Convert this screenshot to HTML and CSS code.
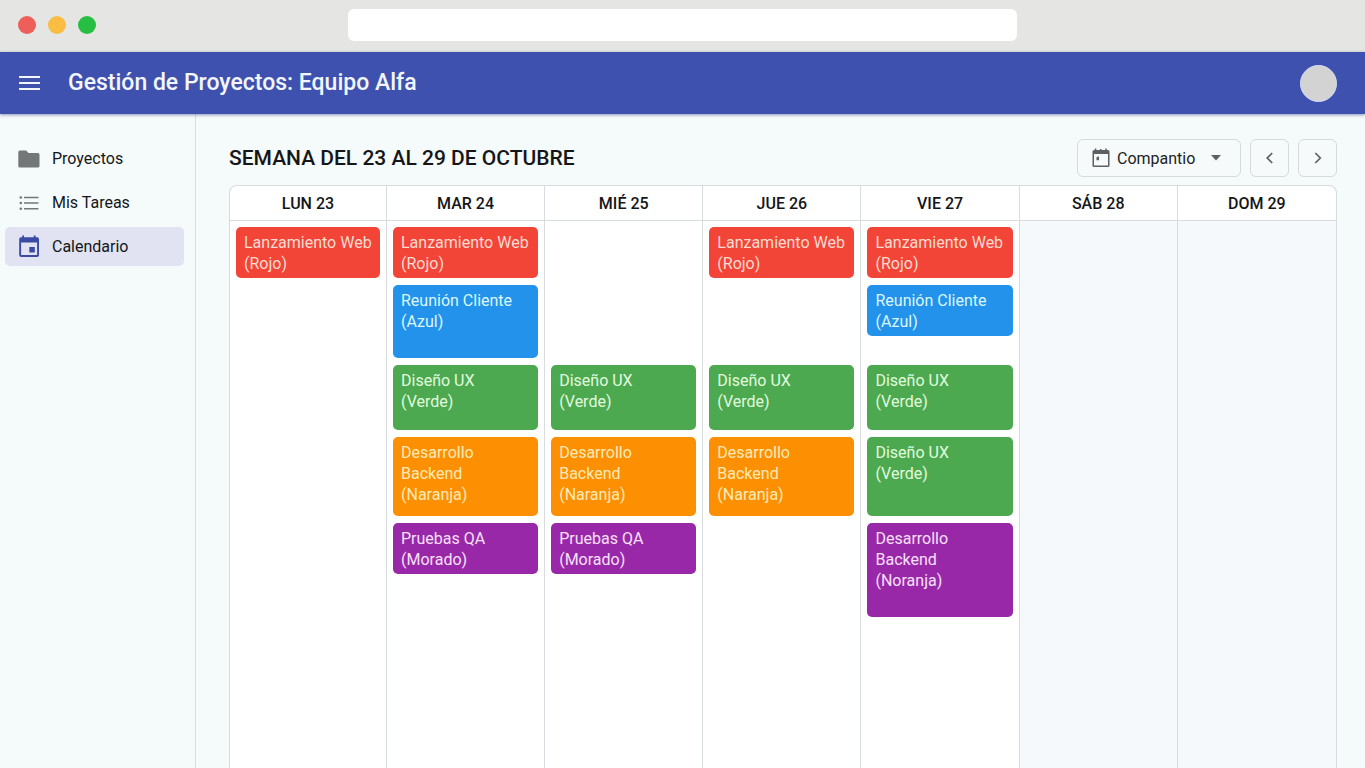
FILE: index.html
```html
<!DOCTYPE html>
<html lang="es">
<head>
<meta charset="utf-8">
<meta name="viewport" content="width=device-width, initial-scale=1">
<title>Gestión de Proyectos: Equipo Alfa</title>
<link rel="stylesheet" href="styles.css">
</head>
<body>
<div class="browser-bar">
  <div class="window-dots">
    <span class="dot dot-close"></span>
    <span class="dot dot-minimize"></span>
    <span class="dot dot-expand"></span>
  </div>
  <input class="address" type="text" aria-label="Dirección">
</div>

<header class="app-header">
  <button class="menu-button" type="button" aria-label="Menú">
    <svg width="22" height="16" viewBox="0 0 22 16" fill="none" stroke="currentColor" stroke-width="2"><path d="M1 2h21M1 8h21M1 14h21"/></svg>
  </button>
  <h1 class="app-title">Gestión de Proyectos: Equipo Alfa</h1>
  <button class="avatar" type="button" aria-label="Perfil"></button>
</header>

<div class="layout">
  <nav class="sidebar">
    <a class="nav-item" href="#">
      <svg class="nav-icon" width="24" height="24" viewBox="0 0 24 24" fill="currentColor"><path d="M3 3.500h6.200l2.300 2.400h9.300a1.700 1.700 0 0 1 1.700 1.700v11.300a1.700 1.700 0 0 1-1.700 1.700H3a1.700 1.700 0 0 1-1.700-1.700V5.200A1.700 1.700 0 0 1 3 3.500z"/></svg>
      Proyectos
    </a>
    <a class="nav-item" href="#">
      <svg class="nav-icon" width="24" height="24" viewBox="0 0 24 24" fill="currentColor"><path d="M7 5.700h14.500v1.600H7zM7 11.200h14.500v1.600H7zM7 16.900h14.500v1.600H7z"/><circle cx="3.800" cy="6.500" r="1.300"/><circle cx="3.800" cy="12" r="1.300"/><circle cx="3.800" cy="17.700" r="1.300"/></svg>
      Mis Tareas
    </a>
    <a class="nav-item nav-item-active" href="#" aria-current="page">
      <svg class="nav-icon" width="24" height="24" viewBox="0 0 24 24" fill="currentColor"><path fill-rule="evenodd" d="M5.200.5h1.800v1.800h9.800V.5h1.800v1.800h1.500a1.900 1.900 0 0 1 1.900 1.900v15.800a1.900 1.900 0 0 1-1.900 1.900H4.100a1.900 1.900 0 0 1-1.900-1.900V4.200A1.900 1.900 0 0 1 4.100 2.300h1.100zM4.100 7.500v12.500h16v-12.500z"/><path d="M12.300 12h5.500v5.500h-5.500z"/></svg>
      Calendario
    </a>
  </nav>

  <main class="content">
    <div class="toolbar">
      <h2 class="week-title">SEMANA DEL 23 AL 29 DE OCTUBRE</h2>
      <div class="controls">
        <div class="view-select">
          <svg width="18" height="20" viewBox="0 0 18 20" fill="currentColor"><path fill-rule="evenodd" d="M2.800.5h1.500V2h3.700V1h1.500v1h3.700V.5h1.500V2H16a1.500 1.500 0 0 1 1.500 1.500v14A1.500 1.500 0 0 1 16 19H2a1.500 1.500 0 0 1-1.500-1.500v-14A1.500 1.500 0 0 1 2 2h.800zM2 6v11.500h14V6z"/><path d="M4.500 9.200l2.500-.9v3.900H4.500z"/></svg>
          <select class="view-field" aria-label="Vista"><option>Compantio</option></select>
          <svg class="caret" width="10" height="6" viewBox="0 0 10 6" fill="currentColor"><path d="M0 0h10L5 5.500z"/></svg>
        </div>
        <button class="step-button" type="button" aria-label="Semana anterior">
          <svg width="8" height="12" viewBox="0 0 8 12" fill="none" stroke="currentColor" stroke-width="1.700"><path d="M6.200 1l-5 5 5 5"/></svg>
        </button>
        <button class="step-button" type="button" aria-label="Semana siguiente">
          <svg width="8" height="12" viewBox="0 0 8 12" fill="none" stroke="currentColor" stroke-width="1.700"><path d="M1.300 1l5 5-5 5"/></svg>
        </button>
      </div>
    </div>

    <div class="calendar">
      <table class="week">
        <thead>
          <tr>
            <th scope="col">LUN 23</th>
            <th scope="col">MAR 24</th>
            <th scope="col">MIÉ 25</th>
            <th scope="col">JUE 26</th>
            <th scope="col">VIE 27</th>
            <th scope="col">SÁB 28</th>
            <th scope="col">DOM 29</th>
          </tr>
        </thead>
        <tbody>
          <tr>
            <td>
              <div class="day">
                <div class="event slot-1 red">Lanzamiento Web (Rojo)</div>
              </div>
            </td>
            <td>
              <div class="day">
                <div class="event slot-1 red">Lanzamiento Web (Rojo)</div>
                <div class="event slot-2 blue">Reunión Cliente (Azul)</div>
                <div class="event slot-3 green">Diseño UX<br>(Verde)</div>
                <div class="event slot-4 orange">Desarrollo<br>Backend<br>(Naranja)</div>
                <div class="event slot-5 purple">Pruebas QA (Morado)</div>
              </div>
            </td>
            <td>
              <div class="day">
                <div class="event slot-3 green">Diseño UX<br>(Verde)</div>
                <div class="event slot-4 orange">Desarrollo<br>Backend<br>(Naranja)</div>
                <div class="event slot-5 purple">Pruebas QA (Morado)</div>
              </div>
            </td>
            <td>
              <div class="day">
                <div class="event slot-1 red">Lanzamiento Web (Rojo)</div>
                <div class="event slot-3 green">Diseño UX<br>(Verde)</div>
                <div class="event slot-4 orange">Desarrollo<br>Backend<br>(Naranja)</div>
              </div>
            </td>
            <td>
              <div class="day">
                <div class="event slot-1 red">Lanzamiento Web (Rojo)</div>
                <div class="event slot-2 blue short">Reunión Cliente (Azul)</div>
                <div class="event slot-3 green">Diseño UX<br>(Verde)</div>
                <div class="event slot-4 green">Diseño UX<br>(Verde)</div>
                <div class="event slot-5 purple tall">Desarrollo<br>Backend<br>(Noranja)</div>
              </div>
            </td>
            <td class="weekend"></td>
            <td class="weekend"></td>
          </tr>
        </tbody>
      </table>
    </div>
  </main>
</div>
</body>
</html>
```
FILE: styles.css
```css
* {
  box-sizing: border-box;
}

body {
  margin: 0;
  height: 100vh;
  display: flex;
  flex-direction: column;
  overflow: hidden;
  background: #f5fafb;
  color: #141618;
  font: 16px/21px Roboto, "Liberation Sans", sans-serif;
}

button,
select,
input {
  font: inherit;
  color: inherit;
}

.browser-bar {
  flex: none;
  display: grid;
  grid-template-columns: 1fr 49% 1fr;
  align-items: center;
  height: 52px;
  padding-bottom: 2px;
  background: #e5e5e4;
}

.window-dots {
  display: flex;
  gap: 12px;
  padding-left: 18px;
}

.dot {
  width: 18px;
  height: 18px;
  border-radius: 50%;
}

.dot-close { background: #ed5f58; }
.dot-minimize { background: #f8bd42; }
.dot-expand { background: #26bf43; }

.address {
  width: 100%;
  height: 32px;
  padding: 0 12px;
  border: 0;
  border-radius: 6px;
  background: #fff;
}

.app-header {
  flex: none;
  display: flex;
  align-items: center;
  height: 62px;
  padding: 0 28px 0 18px;
  background: #3f51ae;
  color: #f3f6ff;
  box-shadow: 0 1px 3px rgba(40, 55, 120, 0.5);
  z-index: 1;
}

.menu-button {
  display: flex;
  padding: 0;
  border: 0;
  background: none;
}

.app-title {
  flex: 1;
  margin: 0 0 0 28px;
  font-size: 23px;
  line-height: 32px;
  font-weight: 500;
}

.avatar {
  width: 37px;
  height: 37px;
  padding: 0;
  border: 1px solid #d3dcf2;
  border-radius: 50%;
  background: #d3d3d3;
}

.layout {
  flex: 1;
  display: flex;
  min-height: 0;
}

.sidebar {
  flex: none;
  display: flex;
  flex-direction: column;
  gap: 5px;
  width: 196px;
  padding: 25px 11px 0 5px;
  border-right: 1px solid #d9dde0;
}

.nav-item {
  display: flex;
  align-items: center;
  gap: 11px;
  height: 39px;
  padding: 0 12px;
  border-radius: 5px;
  color: inherit;
  text-decoration: none;
}

.nav-icon {
  color: #747777;
}

.nav-item-active {
  background: #e1e3f2;
}

.nav-item-active .nav-icon {
  color: #3b4ba3;
}

.content {
  flex: 1;
  display: flex;
  flex-direction: column;
  gap: 8px;
  min-width: 0;
  padding: 25px 28px 0 33px;
}

.toolbar {
  display: flex;
  align-items: center;
  justify-content: space-between;
}

.week-title {
  margin: 0;
  font-size: 21px;
  line-height: 28px;
  font-weight: 500;
}

.controls {
  display: flex;
  gap: 9px;
}

.view-select,
.step-button {
  display: flex;
  align-items: center;
  height: 38px;
  border: 1px solid #d5dadd;
  border-radius: 6px;
  background: #f7fafb;
  color: #5c6063;
}

.view-select {
  position: relative;
  padding-left: 14px;
}

.view-field {
  appearance: none;
  width: 130px;
  height: 100%;
  padding: 0 0 0 7px;
  border: 0;
  background: none;
  color: #202325;
}

.caret {
  position: absolute;
  right: 19px;
  pointer-events: none;
}

.step-button {
  justify-content: center;
  width: 39px;
  padding: 0;
}

.calendar {
  flex: 1;
  min-height: 0;
  overflow: hidden;
  border: 1px solid #d9dcde;
  border-bottom: 0;
  border-radius: 8px 8px 0 0;
  background: #fff;
}

.week {
  width: 100%;
  height: 100%;
  table-layout: fixed;
  border-collapse: separate;
  border-spacing: 0;
}

.week th {
  height: 35px;
  padding: 0;
  border-bottom: 1px solid #d9dcde;
  font-weight: 500;
}

.week th:first-child {
  width: 157px;
}

.week td {
  padding: 6px;
  vertical-align: top;
}

.week th:not(:last-child),
.week td:not(:last-child) {
  border-right: 1px solid #d9dcde;
}

.week .weekend {
  background: #f5f9fb;
}

.day {
  display: grid;
  grid-template-rows: 51px 73px 65px 79px auto;
  row-gap: 7px;
}

.event {
  min-height: 51px;
  padding: 5px 8px 4px;
  border-radius: 5px;
  color: #fff;
}

.slot-1 { grid-row: 1; }
.slot-2 { grid-row: 2; }
.slot-3 { grid-row: 3; }
.slot-4 { grid-row: 4; }
.slot-5 { grid-row: 5; }

.short { align-self: start; }
.tall { min-height: 94px; }

.red { background: #f24537; color: #ffdcd2; }
.blue { background: #2392ea; color: #dcf8ff; }
.green { background: #4ca950; color: #e2fbdf; }
.orange { background: #fd9002; color: #ffebb8; }
.purple { background: #9828a8; color: #f9e0fb; }
```
